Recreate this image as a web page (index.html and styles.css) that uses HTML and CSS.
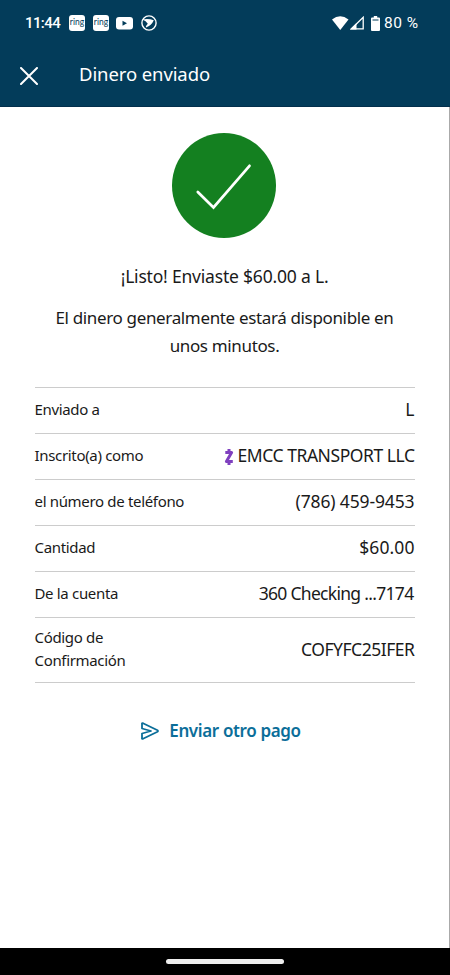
FILE: index.html
```html
<!DOCTYPE html>
<html lang="es">
<head>
    <meta charset="UTF-8">
    <meta name="viewport" content="width=device-width, initial-scale=1.0">
    <title>Dinero enviado</title>
    <link rel="stylesheet" href="styles.css">
</head>
<body>
    <header class="top">
        <div class="status-bar">
            <span class="clock">11:44</span>
            <span class="ring">ring</span>
            <span class="ring">ring</span>
            <svg class="youtube" width="17" height="13" viewBox="0 0 17 13">
                <rect width="17" height="12.5" rx="3" fill="#fff"/>
                <path d="M6.5 3.8v5l4.5-2.5z" fill="#033c5a"/>
            </svg>
            <svg class="app-icon" width="16" height="16" viewBox="0 0 16 16">
                <circle cx="8" cy="8" r="7.1" fill="none" stroke="#fff" stroke-width="1.4"/>
                <path d="M1.500 4.500Q7 3.200 12.800 5.200Q10.500 10.500 5 12.500Q4.300 11.500 6.800 8.800Q5 6 1.500 4.500z" fill="#fff"/>
            </svg>
            <svg class="wifi" width="17" height="14" viewBox="0 0 17 14">
                <path d="M0 3.500Q8.200 -3 16.500 3.500L8.250 14z" fill="#fff"/>
            </svg>
            <svg class="signal" width="14" height="14" viewBox="0 0 14 14">
                <path d="M13.200 1.300V12.800H1.500z" fill="none" stroke="#fff" stroke-width="1.3"/>
                <path d="M0 13.500L6.500 7V13.500z" fill="#fff"/>
            </svg>
            <svg class="battery" width="9" height="15" viewBox="0 0 9 15">
                <path d="M2.800 0H6.200V1.500H8Q9 1.500 9 2.500V14Q9 15 8 15H1Q0 15 0 14V2.500Q0 1.500 1 1.500H2.800z" fill="#fff"/>
                <path d="M1.500 4H7.500" stroke="#033c5a" stroke-width="1"/>
            </svg>
            <span class="percent">80 %</span>
        </div>
        <div class="app-bar">
            <svg class="close" width="18" height="18" viewBox="0 0 18 18">
                <path d="M1 1L17 17M17 1L1 17" stroke="#fff" stroke-width="2" stroke-linecap="round"/>
            </svg>
            <h1>Dinero enviado</h1>
        </div>
    </header>

    <main>
        <svg class="success" width="104" height="105" viewBox="0 0 104 105">
            <ellipse cx="52" cy="52.500" rx="52" ry="52.500" fill="#148020"/>
            <path d="M25.800 59L41.500 74.500L77.500 32.800" fill="none" stroke="#fff" stroke-width="2.700" stroke-linecap="round"/>
        </svg>
        <h2>¡Listo! Enviaste $60.00 a L.</h2>
        <p class="note"><span class="first">El dinero generalmente estará disponible en</span> unos minutos.</p>

        <!-- Payment details -->
        <dl class="details">
            <div class="row">
                <dt>Enviado a</dt>
                <dd>L</dd>
            </div>
            <div class="row">
                <dt>Inscrito(a) como</dt>
                <dd class="name">
                    <svg class="zelle" width="10" height="18" viewBox="0 0 10 18">
                        <path d="M5 1V4M5 14V17M1.300 4.500H7.600L2.400 13.500H8.800" fill="none" stroke="#7f40bf" stroke-width="3" stroke-linejoin="round"/>
                    </svg>
                    <span>EMCC TRANSPORT LLC</span>
                </dd>
            </div>
            <div class="row">
                <dt>el número de teléfono</dt>
                <dd class="phone">(786) 459-9453</dd>
            </div>
            <div class="row">
                <dt>Cantidad</dt>
                <dd class="amount">$60.00</dd>
            </div>
            <div class="row">
                <dt>De la cuenta</dt>
                <dd class="account">360 Checking ...7174</dd>
            </div>
            <div class="row tall">
                <dt>Código de<br>Confirmación</dt>
                <dd class="code">COFYFC25IFER</dd>
            </div>
        </dl>

        <a class="again" href="#">
            <svg width="20" height="18" viewBox="0 0 20 18">
                <path d="M2 2Q1.700 .8 3 1.200L17.500 8.300Q18.500 9 17.500 9.700L3 16.800Q1.700 17.200 2 16V11.500L11 9L2 6.500z" fill="none" stroke="#0b6e99" stroke-width="1.800" stroke-linejoin="round"/>
            </svg>
            <span>Enviar otro pago</span>
        </a>
    </main>

    <footer class="nav-bar">
        <div class="handle"></div>
    </footer>
</body>
</html>
```
FILE: styles.css
```css
* {
    box-sizing: border-box;
}

body {
    margin: 0;
    height: 975px;
    display: flex;
    flex-direction: column;
    font-family: "Noto Sans", "Open Sans", sans-serif;
    color: #1a1a1a;
    background: #fff;
}

/* Header */
.top {
    height: 107px;
    background: #033c5a;
    color: #fff;
    border-bottom: 1px solid #032f4c;
}

.status-bar {
    display: flex;
    align-items: center;
    height: 46px;
    padding: 0 31px 0 25px;
    font-family: Roboto, sans-serif;
}

.clock {
    width: 35px;
    font-size: 15px;
    font-weight: 500;
    line-height: 18px;
    letter-spacing: -0.6px;
    white-space: nowrap;
}

.ring {
    width: 16px;
    height: 16px;
    margin-left: 9px;
    border-radius: 3px;
    background: #fff;
    color: #033c5a;
    font-family: Lato, sans-serif;
    font-size: 8.5px;
    line-height: 14px;
    text-align: center;
}

.ring + .ring {
    margin-left: 8px;
}

.youtube {
    margin-left: 7px;
}

.app-icon {
    margin-left: 8px;
}

.wifi {
    margin-left: auto;
}

.signal {
    margin-left: 1px;
}

.battery {
    margin-left: 7px;
}

.percent {
    width: 35px;
    margin-left: 4px;
    font-size: 15.5px;
    letter-spacing: 0.5px;
    white-space: nowrap;
}

.app-bar {
    display: flex;
    align-items: center;
    height: 60px;
    padding-left: 20px;
}

h1 {
    margin: -5px 0 0 41px;
    font-size: 18.5px;
    font-weight: 400;
    line-height: 26px;
    letter-spacing: -0.1px;
}

/* Content */
main {
    flex: 1;
    display: flex;
    flex-direction: column;
    align-items: center;
    padding: 26px 35px 0;
    border-right: 1px solid #aaa;
}

.success {
    flex: none;
    margin-right: 1px;
}

h2 {
    margin: 24px 0 0;
    font-size: 17.5px;
    font-weight: 400;
    line-height: 28px;
    letter-spacing: -0.2px;
    white-space: nowrap;
}

.note {
    margin: 14px 0 0;
    font-size: 17px;
    line-height: 28px;
    letter-spacing: -0.35px;
    text-align: center;
}

.first {
    display: block;
    white-space: nowrap;
}

.details {
    width: 380px;
    margin: 27px 0 0;
    border-top: 1px solid #ccc;
}

.row {
    display: flex;
    align-items: center;
    justify-content: space-between;
    height: 46px;
    padding-bottom: 2px;
    border-bottom: 1px solid #ccc;
}

.row.tall {
    height: 65px;
}

dt {
    font-size: 15px;
    line-height: 23px;
    letter-spacing: -0.33px;
    white-space: nowrap;
}

dd {
    display: flex;
    align-items: center;
    margin: -1px 0 0;
    font-size: 17.5px;
    line-height: 24px;
    white-space: nowrap;
}

.name {
    letter-spacing: -0.45px;
}

.phone {
    letter-spacing: -0.13px;
}

.amount {
    letter-spacing: 0.1px;
}

.account {
    margin-right: 1px;
    letter-spacing: -0.7px;
}

.code {
    letter-spacing: -0.47px;
}

.zelle {
    margin: 3px 4px 0 0;
}

.again {
    display: flex;
    align-items: center;
    gap: 9px;
    margin: 36px 8px 0 0;
    color: #0b6e99;
    font-size: 17px;
    font-weight: 600;
    line-height: 24px;
    letter-spacing: -0.36px;
    text-decoration: none;
    white-space: nowrap;
}

/* Gesture bar */
.nav-bar {
    display: flex;
    align-items: center;
    justify-content: center;
    height: 27px;
    background: #000;
}

.handle {
    width: 118px;
    height: 5px;
    border-radius: 3px;
    background: #eee;
}
```
